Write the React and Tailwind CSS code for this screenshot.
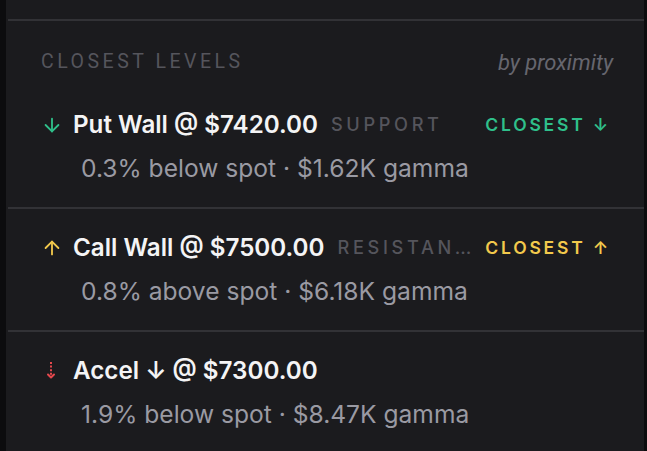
import React from 'react';
import { ArrowDown, ArrowUp } from 'lucide-react';

const levels = [
  {
    id: 'put',
    title: 'Put Wall @ $7420.00',
    tag: 'SUPPORT',
    closest: 'CLOSEST ↓',
    tone: 'green',
    sub: '0.3% below spot · $1.62K gamma',
  },
  {
    id: 'call',
    title: 'Call Wall @ $7500.00',
    tag: 'RESISTANCE',
    closest: 'CLOSEST ↑',
    tone: 'yellow',
    sub: '0.8% above spot · $6.18K gamma',
  },
  {
    id: 'accel',
    title: 'Accel ↓ @ $7300.00',
    tag: null,
    closest: null,
    tone: 'red',
    sub: '1.9% below spot · $8.47K gamma',
  },
];

function DashedDown() {
  return (
    <svg width="22" height="22" viewBox="0 0 22 22" fill="none" className="text-[#e5484d]">
      <path d="M10 2v14" stroke="currentColor" strokeWidth="2" strokeDasharray="2 1.6" />
      <path d="M7 14.5l3 3 3-3" stroke="currentColor" strokeWidth="2" strokeLinecap="round" strokeLinejoin="round" />
    </svg>
  );
}

function LevelIcon({ tone }) {
  if (tone === 'green') return <ArrowDown size={22} strokeWidth={2} className="text-[#2fbf8a]" />;
  if (tone === 'yellow') return <ArrowUp size={22} strokeWidth={2} className="text-[#f2c94c]" />;
  return <DashedDown />;
}

function LevelRow({ level, last }) {
  const closestColor = level.tone === 'green' ? 'text-[#2fbf8a]' : 'text-[#f2c94c]';
  return (
    <div className={last ? 'ml-[2px] pt-[25px] pb-[25px]' : 'ml-[2px] pt-[25px] pb-[25px] border-b-2 border-[#323236]'}>
      <div className="flex items-center pl-[33px] pr-[33px] h-[28px]">
        <div className="w-[32px] shrink-0 flex items-center">
          <LevelIcon tone={level.tone} />
        </div>
        <span className="shrink-0 text-[24.2px] font-semibold text-[#f4f4f5] whitespace-nowrap">{level.title}</span>
        {level.tag && (
          <span className="ml-[13px] min-w-0 truncate text-[18.2px] tracking-[0.2em] text-[#55555c] font-medium">
            {level.tag}
          </span>
        )}
        {level.closest && (
          <span className={`ml-auto pl-[5px] shrink-0 whitespace-nowrap text-[17.5px] tracking-[0.16em] font-semibold ${closestColor}`}>
            {level.closest}
          </span>
        )}
      </div>
      <div className="mt-[15px] pl-[73px] h-[28px] flex items-center text-[24.6px] text-[#9a9aa3] whitespace-nowrap">
        {level.sub}
      </div>
    </div>
  );
}

export default function App() {
  return (
    <div
      className="w-[647px] h-[451px] overflow-hidden flex bg-[#0c0c0e]"
      style={{ fontFamily: 'Inter, "Noto Sans", sans-serif' }}
    >
      <div className="w-[6px] shrink-0" />
      <div className="w-[638px] shrink-0 bg-[#1b1b1e] pt-[19px]">
        <div className="ml-[2px] h-[2px] bg-[#323236]" />
        <div
          className="flex items-center justify-between pl-[35px] pr-[31px] pt-[31px] pb-[14px] h-[20px] box-content"
          style={{ fontFamily: 'Roboto, "Liberation Sans", sans-serif' }}
        >
          <span className="text-[19.5px] tracking-[0.18em] text-[#55555c]">CLOSEST LEVELS</span>
          <span className="text-[22px] italic text-[#66666e]">by proximity</span>
        </div>
        {levels.map((level, i) => (
          <LevelRow key={level.id} level={level} last={i === levels.length - 1} />
        ))}
      </div>
      <div className="flex-1" />
    </div>
  );
}
